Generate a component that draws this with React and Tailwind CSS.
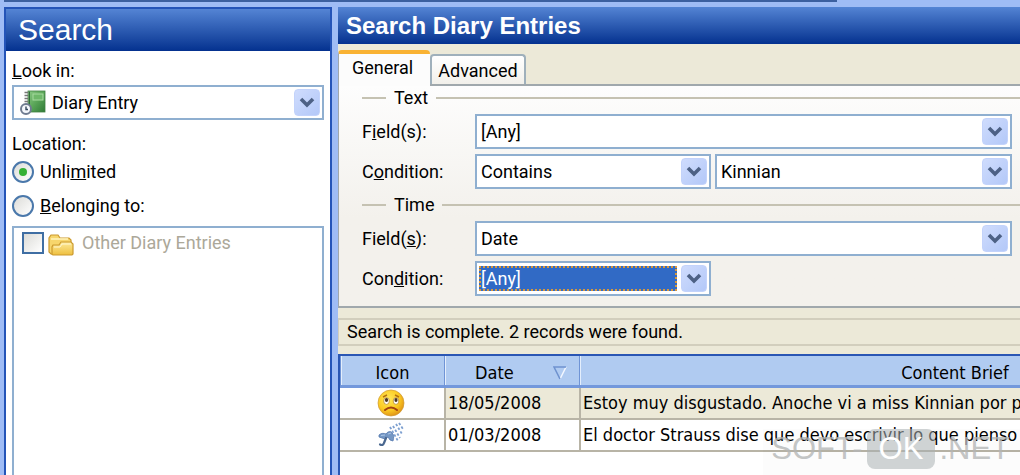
import { useState } from 'react'
import clsx from 'clsx'

const entries = [
  {
    id: 1,
    icon: 'sad',
    date: '18/05/2008',
    brief: 'Estoy muy disgustado. Anoche vi a miss Kinnian por primera vez desde hace semanas',
  },
  {
    id: 2,
    icon: 'rain',
    date: '01/03/2008',
    brief: 'El doctor Strauss dise que devo escrivir lo que pienso y todas las cosas que me pasan',
  },
]

const DiaryIcon = () => (
  <svg width="26" height="26" viewBox="0 0 26 26" className="shrink-0" aria-hidden="true">
    <defs>
      <linearGradient id="book" x1="0" y1="0" x2="1" y2="1">
        <stop offset="0" stopColor="#8ccb86" />
        <stop offset="0.5" stopColor="#5aa558" />
        <stop offset="1" stopColor="#2f7a36" />
      </linearGradient>
    </defs>
    <rect x="8" y="1" width="17" height="21" fill="url(#book)" stroke="#3f7f42" strokeWidth="0.8" />
    <rect x="13" y="4" width="10" height="6" fill="#6fb86a" stroke="#a7dba0" />
    <path d="M9.5 1.5v20" stroke="#2f6e36" />
    <path d="M4.5 2.5h4M4.5 5.5h4M4.5 8.5h4M4.5 11.5h4" stroke="#777" strokeWidth="1.5" />
    <circle cx="6" cy="19" r="5" fill="#f4f7fb" stroke="#6f7b90" strokeWidth="2" />
    <path d="M6 16.5v3h2" fill="none" stroke="#33465c" strokeWidth="1.4" />
  </svg>
)

const FolderIcon = () => (
  <svg width="26" height="22" viewBox="0 0 26 22" className="shrink-0" aria-hidden="true">
    <defs>
      <linearGradient id="folder" x1="0" y1="0" x2="0" y2="1">
        <stop offset="0" stopColor="#fdeb9a" />
        <stop offset="1" stopColor="#eebf3f" />
      </linearGradient>
    </defs>
    <path d="M1 18V4l2-3h7l2 3h9l2 2v12l-2 2H3z" fill="#f7d66c" stroke="#cc9a2e" strokeWidth="1.2" />
    <path d="M3 5h17" stroke="#fff3bd" strokeWidth="1.5" />
    <path d="M4 20.5V13l1-2h6l2-3h10l2 2v10l-1 1H5z" fill="url(#folder)" stroke="#cc9a2e" strokeWidth="1.2" />
    <path d="M6 13h6l2-3h9" fill="none" stroke="#fff6cf" />
  </svg>
)

const SadIcon = () => (
  <svg width="28" height="28" viewBox="0 0 28 28" className="mx-auto block" role="img" aria-label="Sad">
    <defs>
      <radialGradient id="face" cx="0.4" cy="0.35" r="0.7">
        <stop offset="0" stopColor="#ffe85c" />
        <stop offset="0.6" stopColor="#fccb22" />
        <stop offset="1" stopColor="#dd8d14" />
      </radialGradient>
    </defs>
    <circle cx="14" cy="14" r="13" fill="url(#face)" stroke="#cf9a35" strokeWidth="0.7" />
    <ellipse cx="9.5" cy="12" rx="2.8" ry="3.4" fill="#fff" stroke="#b07d18" strokeWidth="0.7" />
    <ellipse cx="19" cy="12" rx="2.8" ry="3.4" fill="#fff" stroke="#b07d18" strokeWidth="0.7" />
    <ellipse cx="9.5" cy="11" rx="1.6" ry="2" fill="#4a3520" />
    <ellipse cx="19" cy="11" rx="1.6" ry="2" fill="#4a3520" />
    <path d="M6 8l4-2M22 8l-4-2" stroke="#b5700f" strokeWidth="1.4" />
    <path d="M8 21q6-5 12 0" fill="none" stroke="#a3420f" strokeWidth="2" strokeLinecap="round" />
  </svg>
)

const RainIcon = () => (
  <svg width="28" height="26" viewBox="0 0 28 26" className="mx-auto block" role="img" aria-label="Rain">
    <path d="M2 13c2-2 5-2 7-1 2-3 5-3 6-1 2 1 2 5 1 8l-3-1-2-3-3 2-3-1-3-1z" fill="#7497c4" stroke="#5478ae" strokeWidth="0.8" />
    <path d="M4 13.5l4-.5M11 12l3-1" stroke="#a9c4e6" strokeWidth="1.2" />
    <path d="M9 16l-2 5q-1 3-4 1.500" fill="none" stroke="#49678f" strokeWidth="2.2" strokeLinecap="round" />
    <path
      d="M13 5l8 14M16 4l7 12M19 2l6 10M22 1l4 6"
      stroke="#7c9fd0"
      strokeWidth="1.8"
      strokeDasharray="2.5 1.8"
    />
  </svg>
)

const Arrow = () => (
  <span className="pointer-events-none flex w-[26px] shrink-0 items-center justify-center self-stretch rounded-sm border border-[#c3d3fb] bg-linear-to-br from-[#cfdcfd] to-[#b3c8f8]">
    <svg width="16" height="12" viewBox="0 0 16 12" aria-hidden="true">
      <path d="M2 2l6 6 6-6" fill="none" stroke="#4d6185" strokeWidth="3.6" />
    </svg>
  </span>
)

const Dropdown = ({ id, options, icon, focused, className, ...rest }) => (
  <div className={clsx('flex h-[35px] items-center border-2 border-[#8fafd0] bg-white p-0.5', className)}>
    {icon}
    <select
      id={id}
      className={clsx(
        'min-w-0 flex-1 appearance-none outline-none',
        focused
          ? 'mr-1 h-[25px] border-2 border-dotted border-[#d9983a] bg-[#316ac5] leading-5 text-white'
          : 'h-full px-0.5',
      )}
      {...rest}
    >
      {options.map((option) => (
        <option key={option}>{option}</option>
      ))}
    </select>
    <Arrow />
  </div>
)

const GroupTitle = ({ children }) => (
  <div className="flex items-center">
    <span className="h-0.5 w-6 bg-[#c5c2b2]" />
    <h3 className="px-2 leading-6">{children}</h3>
    <span className="h-0.5 flex-1 bg-[#c5c2b2]" />
  </div>
)

const FieldRow = ({ id, label, children }) => (
  <div className="flex items-center pr-2">
    <label htmlFor={id} className="w-[113px] shrink-0 leading-6">{label}</label>
    {children}
  </div>
)

const radioClass =
  "grid size-[22px] appearance-none place-items-center rounded-full border-2 border-[#4a78ab] bg-linear-to-br from-[#dcdcd8] to-white before:size-2 before:rounded-full checked:before:bg-[#35b035] before:content-['']"

const SearchPanel = () => {
  const [location, setLocation] = useState('unlimited')

  return (
    <aside className="flex w-[328px] shrink-0 flex-col border-2 border-b-0 border-[#2454b8] bg-white">
      <h1 className="h-[42px] bg-linear-to-b from-[#5484d4] to-[#04318f] px-3 font-['Liberation_Sans',Arial,sans-serif] text-[30px] leading-[42px] text-white">
        Search
      </h1>
      <div className="flex flex-1 flex-col px-1.5 pt-2">
        <label htmlFor="look-in" className="leading-6"><u>L</u>ook in:</label>
        <Dropdown id="look-in" options={['Diary Entry']} icon={<span className="px-1"><DiaryIcon /></span>} className="mt-0.5" />

        <fieldset className="mt-3">
          <legend className="leading-6">Location:</legend>
          <label className="mt-1 flex items-center gap-1.5 leading-6">
            <input
              type="radio"
              name="location"
              className={radioClass}
              checked={location === 'unlimited'}
              onChange={() => setLocation('unlimited')}
            />
            <span>Unli<u>m</u>ited</span>
          </label>
          <label className="mt-2.5 flex items-center gap-1.5 leading-6">
            <input
              type="radio"
              name="location"
              className={radioClass}
              checked={location === 'belonging'}
              onChange={() => setLocation('belonging')}
            />
            <span><u>B</u>elonging to:</span>
          </label>
        </fieldset>

        <div className="mt-2 flex-1 border-2 border-b-0 border-[#8fafd0] px-2 pt-0.5">
          <label className="flex items-center text-[#aca899] leading-6">
            <input
              type="checkbox"
              className="size-[22px] appearance-none border-2 border-[#3f6ea3] bg-linear-to-br from-[#dcdcd8] to-white"
            />
            <span className="pt-1 pr-2 pl-1"><FolderIcon /></span>
            Other Diary Entries
          </label>
        </div>
      </div>
    </aside>
  )
}

const SearchForm = () => {
  const [tab, setTab] = useState('general')

  return (
    <section className="bg-[#ece9d8] pt-1.5">
      <div role="tablist" className="flex items-end">
        <button
          type="button"
          role="tab"
          aria-selected={tab === 'general'}
          onClick={() => setTab('general')}
          className="relative -mb-0.5 h-9 w-[92px] rounded-t border-t-4 border-l border-[#f9b233] border-l-[#a0a8ac] bg-[#fcfcfc] pr-1 pb-2"
        >
          General
        </button>
        <button
          type="button"
          role="tab"
          aria-selected={tab === 'advanced'}
          onClick={() => setTab('advanced')}
          className="h-[30px] w-24 rounded-t border-2 border-b-0 border-[#9fb0bb] bg-linear-to-b from-white to-[#f2f0ea]"
        >
          Advanced
        </button>
      </div>
      <div className="border-y-2 border-l border-[#a0a8ac] bg-linear-to-b from-[#fdfdfd] to-[#f3f1ec] to-60% pb-2.5 pl-[23px]">
        <GroupTitle>Text</GroupTitle>
        <div className="mt-1 flex flex-col gap-[5px]">
          <FieldRow id="text-field" label={<>F<u>i</u>eld(s):</>}>
            <Dropdown id="text-field" options={['[Any]']} className="flex-1" />
          </FieldRow>
          <FieldRow id="text-condition" label={<>C<u>o</u>ndition:</>}>
            <Dropdown id="text-condition" options={['Contains']} className="w-[236px]" />
            <Dropdown id="text-value" aria-label="Value" options={['Kinnian']} className="ml-1 flex-1" />
          </FieldRow>
        </div>
        <div className="mt-1">
          <GroupTitle>Time</GroupTitle>
        </div>
        <div className="mt-1 flex flex-col gap-[5px]">
          <FieldRow id="time-field" label={<>Field(<u>s</u>):</>}>
            <Dropdown id="time-field" options={['Date']} className="flex-1" />
          </FieldRow>
          <FieldRow id="time-condition" label={<>Con<u>d</u>ition:</>}>
            <Dropdown id="time-condition" options={['[Any]']} focused className="w-[236px]" />
          </FieldRow>
        </div>
      </div>
    </section>
  )
}

const headCell = 'border-b-3 border-l border-b-[#7398dc] border-l-[#6f94d6] px-0 pt-1 pb-0 text-center font-normal shadow-[inset_1px_0_0_#e4eefc]'
const bodyCell = 'overflow-hidden border-b-2 border-l-2 border-[#b8b4a6] px-0.5 py-0 whitespace-nowrap first:border-l-0 first:pr-1'

const Results = () => (
  <div className="flex-1 overflow-hidden border-t-2 border-l-2 border-[#2a56b4] bg-white">
    <table className="w-[990px] table-fixed border-separate border-spacing-0 font-['DejaVu_Sans_Condensed','DejaVu_Sans',sans-serif] text-[18px] leading-6">
      <colgroup>
        <col className="w-[104px]" />
        <col className="w-[135px]" />
        <col />
      </colgroup>
      <thead className="bg-[#b0cbf1]">
        <tr className="h-8">
          <th className={headCell}>Icon</th>
          <th className={headCell}>
            <span className="flex items-center justify-between pr-3 pl-[30px]">
              Date
              <svg width="14" height="14" viewBox="0 0 14 14" aria-hidden="true">
                <path d="M13 1L7 13" stroke="#f2f7ff" strokeWidth="1.6" />
                <path d="M13 1H1l6 12" fill="none" stroke="#6f92cf" strokeWidth="1.6" />
              </svg>
            </span>
          </th>
          <th className={headCell}>Content Brief</th>
        </tr>
      </thead>
      <tbody>
        {entries.map((entry, index) => (
          <tr key={entry.id} className="h-8">
            <td className={bodyCell}>{entry.icon === 'sad' ? <SadIcon /> : <RainIcon />}</td>
            <td className={clsx(bodyCell, index === 0 && 'bg-[#ece9d8]')}>{entry.date}</td>
            <td className={clsx(bodyCell, index === 0 && 'bg-[#ece9d8]')}>{entry.brief}</td>
          </tr>
        ))}
      </tbody>
    </table>
  </div>
)

const Watermark = () => (
  <div className="pointer-events-none absolute right-0 bottom-0 flex items-center gap-1 bg-black/1 pr-2.5 pb-1.5 pl-2 font-['Liberation_Sans',Arial,sans-serif] text-[31px] leading-10 text-[#b4b6b6]/80">
    <span>SOFT-</span>
    <span className="rounded-lg bg-[#a9b1b3]/55 px-3 text-white">OK</span>
    <span>.NET</span>
  </div>
)

const App = () => (
  <div className="relative flex h-screen flex-col overflow-hidden bg-[#9fbcf5] pl-1 font-['Roboto',Arial,sans-serif] text-[18px] text-black">
    <div className="h-0.5 w-[82%] shrink-0 bg-[#3c60a0]" />
    <div className="flex min-h-0 flex-1 gap-1.5 pt-[5px]">
      <SearchPanel />
      <main className="flex min-w-0 flex-1 flex-col bg-[#ece9d8]">
        <h2 className="h-[37px] shrink-0 bg-linear-to-b from-[#5484d4] to-[#04318f] px-2 font-['Liberation_Sans',Arial,sans-serif] text-2xl leading-[37px] font-bold text-white">
          Search Diary Entries
        </h2>
        <SearchForm />
        <p className="mt-2.5 mb-2 border-y-2 border-l border-[#d2cebd] px-2 leading-6">
          Search is complete. 2 records were found.
        </p>
        <Results />
      </main>
    </div>
    <Watermark />
  </div>
)

export default App
